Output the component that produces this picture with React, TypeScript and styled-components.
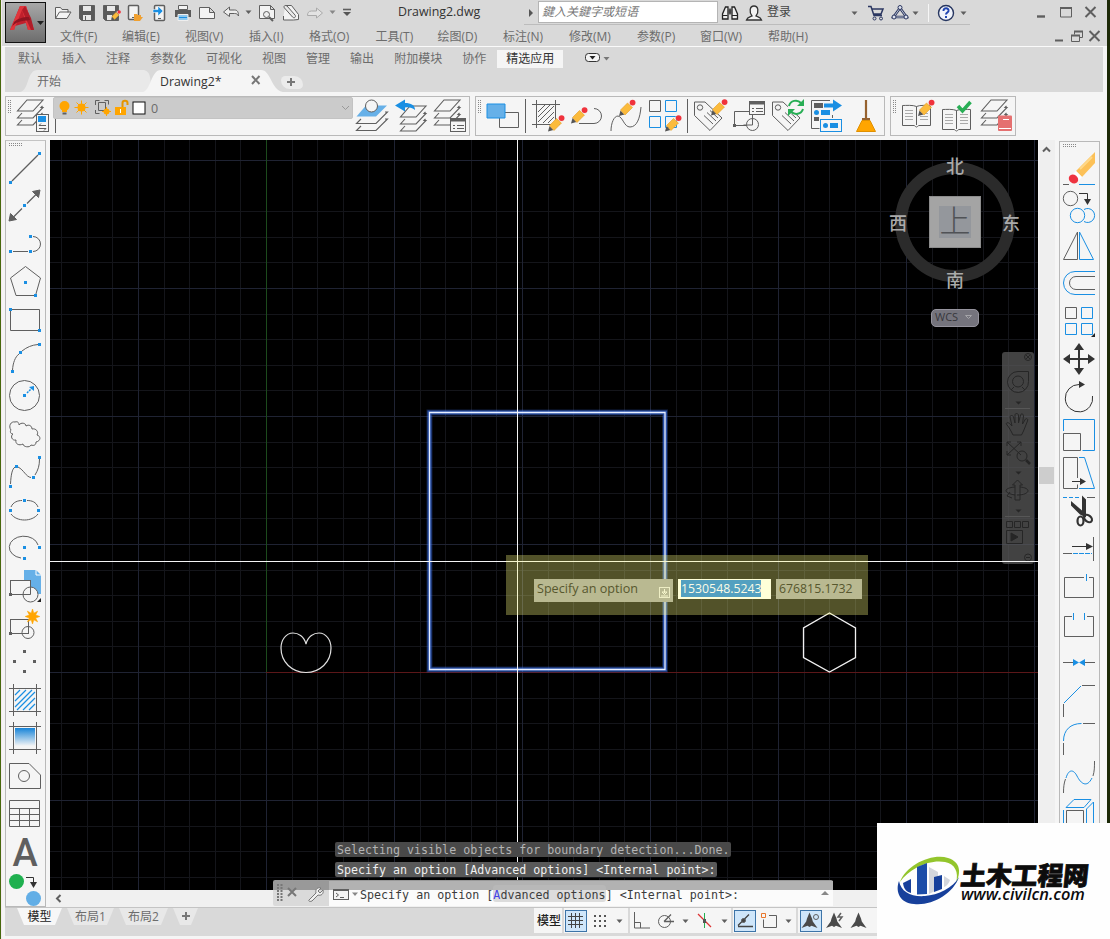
import React from 'react';
import styled, { createGlobalStyle, css } from 'styled-components';

const ui = `"Open Sans", "Noto Sans CJK SC", sans-serif`;
const ink = '#5f5f5f';
const blue = '#1a8fe3';

const GlobalStyle = createGlobalStyle`
  * { box-sizing: border-box; }
  body { margin: 0; background: #24380a; font-family: ${ui}; font-size: 12px; color: #6c6c6c; overflow: hidden; }
  svg { display: block; flex: none; overflow: visible; }
`;

const Desktop = styled.div`
  position: relative;
  width: 1110px;
  height: 939px;
  padding: 0 3px 0 1px;
  background: linear-gradient(90deg, #46680d 0 2px, #1b2806 1100px);
  overflow: hidden;
`;
const Window = styled.div`
  height: 939px;
  background: #f5f5f5;
  border-left: 1px solid #f5e9ee;
  display: flex;
  flex-direction: column;
`;

/* ---------- header ---------- */
const Header = styled.header`
  height: 47px;
  background: #d9d9d9;
  border-bottom: 1px solid #fafafa;
  display: flex;
  padding-left: 3px;
  flex: none;
`;
const AppButton = styled.button`
  width: 41px;
  height: 41px;
  margin-top: 2px;
  padding: 0;
  border: 1px solid #111;
  background: linear-gradient(#a8a8a8, #6d6d6d);
  flex: none;
`;
const HeaderRows = styled.div`flex: 1; padding-left: 6px;`;
const TitleRow = styled.div`
  height: 26px;
  display: flex;
  align-items: center;
`;
const DocTitle = styled.div`
  width: 126px;
  margin-left: 42px;
  font-size: 12.4px;
  line-height: 24px;
  height: 26px;
  color: #333;
  white-space: nowrap;
`;
const Search = styled.div`
  width: 180px;
  height: 22px;
  border: 1px solid #b4b4b4;
  background: #fff;
  padding-left: 3px;
  line-height: 19px;
  font-style: italic;
  color: #777;
  margin: -1px 2px 0 0;
`;
const Underlined = styled.div`
  display: flex;
  align-items: center;
  height: 25px;
  border-bottom: 1px solid #bcbcbc;
  align-self: flex-start;
`;
const SignIn = styled.span`width: 80px; color: #444; line-height: 24px;`;
const MenuRow = styled.nav`
  display: flex;
  height: 20px;
  padding-left: 8px;
  line-height: 21px;
`;
const MenuItem = styled.span<{ $w: number }>`
  width: ${p => p.$w}px;
  white-space: nowrap;
`;

/* ---------- ribbon ---------- */
const Ribbon = styled.div`
  height: 45px;
  margin: 0 4px 0 3px;
  background: #d9d9d9;
  flex: none;
`;
const RibbonTabs = styled.div`
  display: flex;
  height: 23px;
  padding: 3px 0 0 3px;
`;
const RibbonTab = styled.span<{ $on?: boolean }>`
  height: 18px;
  line-height: 18px;
  padding: 0 10px;
  white-space: nowrap;
  ${p => p.$on && css`background: #f5f5f5; color: #333; padding: 0 9px; margin-left: 1px; margin-right: 19px;`}
`;
const FileTabs = styled.div`
  display: flex;
  height: 22px;
  padding-left: 15px;
`;
const FileTab = styled.div<{ $on?: boolean }>`
  height: 22px;
  line-height: 23px;
  width: ${p => (p.$on ? 142 : 131)}px;
  padding-left: 17px;
  margin-right: ${p => (p.$on ? -6 : -8)}px;
  font-size: ${p => (p.$on ? 12.3 : 12)}px;
  color: ${p => (p.$on ? '#333' : '#6c6c6c')};
  background: ${p => (p.$on ? '#f5f5f5' : '#e9e9e9')};
  clip-path: ${p =>
    p.$on
      ? `path('M0 22 C8 20 8 0 18 0 H118 C128 0 128 20 140 22 Z')`
      : `path('M0 22 C10 20 6 0 18 0 H122 C130 0 131 6 131 22 Z')`};
  display: flex;
`;
const TabClose = styled.span`margin: 5px 0 0 29px;`;
const AddTab = styled.span`
  width: 22px;
  height: 13px;
  margin: 6px 0 0 2px;
  background: #ebebeb;
  border-radius: 5px 10px 5px 10px;
`;

/* ---------- toolbars ---------- */
const ToolbarRow = styled.div`
  display: flex;
  gap: 5px;
  padding: 4px 0 0 3px;
  height: 48px;
  flex: none;
`;
const Toolbar = styled.div<{ $w: number }>`
  width: ${p => p.$w}px;
  height: 40px;
  border: 1px solid #b9b9b9;
  display: flex;
`;
const Combo = styled.div`
  width: 300px;
  height: 22px;
  background: #cbcbcb;
  border: 1px solid #c3c3c3;
  border-radius: 2px;
  display: flex;
  align-items: center;
  line-height: 20px;
  font-size: 12px;
`;
const ComboCol = styled.div`display: flex; flex-direction: column; width: 303px;`;
const ComboText = styled.span`flex: 1; padding: 1px 0 0 5px; font-size: 12.5px;`;

const Workspace = styled.div`
  display: flex;
  height: 767px;
  padding-left: 3px;
  flex: none;
`;
const SideBar = styled.div<{ $right?: boolean }>`
  width: 41px;
  height: ${p => (p.$right ? 766 : 767)}px;
  margin: ${p => (p.$right ? '1px 0 0 4px' : '0 4px 0 0')};
  border: 1px solid #b9b9b9;
  ${p => !p.$right && css`border-color: #c4c4c4 #b9b9b9 #b9b9b9;`}
  overflow: hidden;
  flex: none;
`;
const Center = styled.div`width: 1005px; flex: none;`;
const CanvasRow = styled.div`display: flex; height: 750px;`;
const Canvas = styled.main`
  position: relative;
  width: 988px;
  height: 750px;
  background: #000;
  overflow: hidden;
`;
const VScroll = styled.div`
  width: 17px;
  height: 750px;
  padding: 6px 0 0 1px;
  background: linear-gradient(90deg, #f5f5f5 1px, #efefef 1px);
`;
const Thumb = styled.div`
  width: 15px;
  height: 17px;
  margin-top: 309px;
  background: #cdcdcd;
`;
const HScroll = styled.div`
  height: 17px;
  background: #f0f0f0;
  padding: 3px 0 0 4px;
`;

/* ---------- canvas overlays ---------- */
const Scene = styled.svg`position: absolute; left: 0; top: 0;`;
const Wcs = styled.div`
  position: absolute;
  left: 881px;
  top: 169px;
  width: 48px;
  height: 18px;
  border: 1px solid #96949e;
  border-radius: 5px;
  background: #75747d;
  color: #37373c;
  font: 11px/14px ${ui};
  padding-left: 3px;
  display: flex;
  gap: 7px;
`;
const NavBar = styled.div`
  position: absolute;
  left: 952px;
  top: 212px;
  width: 32px;
  height: 212px;
  border-radius: 3px;
  background: rgba(92, 92, 92, .72);
`;
const DynInput = styled.div`
  position: absolute;
  left: 456px;
  top: 415px;
  width: 362px;
  height: 60px;
  background: rgba(255, 255, 128, .32);
  padding: 24px 0 0 28px;
  display: flex;
  align-items: flex-start;
  gap: 5px;
  font: 12.6px/18px ${ui};
  color: #57572e;
`;
const Prompt = styled.div`
  width: 139px;
  height: 23px;
  padding: 0 3px;
  line-height: 20px;
  background: #b9b991;
  display: flex;
  justify-content: space-between;
  white-space: nowrap;
`;
const Coord = styled.div<{ $on?: boolean }>`
  width: ${p => (p.$on ? 93 : 86)}px;
  height: 20px;
  padding: 1px 0 0 3px;
  line-height: 18px;
  font-size: 12.3px;
  background: ${p => (p.$on ? '#ffffd8' : '#b9b991')};
`;
const Selected = styled.span`
  display: block;
  width: 80px;
  height: 17px;
  line-height: 18px;
  background: #53a0c0;
  color: #fbfbe6;
`;
const History = styled.div`
  position: absolute;
  left: 285px;
  top: 702px;
  display: flex;
  flex-direction: column;
  align-items: flex-start;
  gap: 5px;
`;
const HistoryLine = styled.div<{ $dim?: boolean }>`
  height: 15px;
  padding: 0 2px;
  border-radius: 2px;
  background: ${p => (p.$dim ? '#494949' : '#595959')};
  color: ${p => (p.$dim ? '#b4b4b4' : '#f0f0f0')};
  font: 11.65px/17px "DejaVu Sans Mono", monospace;
  white-space: pre;
`;
const CommandLine = styled.div`
  position: absolute;
  left: 273px;
  top: 880px;
  width: 560px;
  height: 26px;
  display: flex;
  border-radius: 2px;
  background: linear-gradient(#999 10px, #dadada 10px);
`;
const CommandField = styled.div`
  margin-top: 1px;
  flex: 1;
  display: flex;
  color: #3c3c3c;
  background: linear-gradient(#b2b2b2 9px, #fbfbfb 9px);
  font: 11.66px/29px "DejaVu Sans Mono", monospace;
  white-space: pre;
`;
const Keyword = styled.span`
  height: 17px;
  line-height: 20px;
  margin-top: 4px;
  border-radius: 3px;
  background: rgba(190, 190, 190, .5);
  & > b { color: #4444e8; font-weight: normal; }
`;

/* ---------- footer ---------- */
const Footer = styled.footer`
  height: 29px;
  margin: 0 4px 0 3px;
  background: #d9d9d9;
  border-top: 1px solid #c4c4c4;
  display: flex;
  flex: none;
`;
const LayoutTabs = styled.div`display: flex; width: 529px; padding-left: 12px;`;
const LayoutTab = styled.span<{ $on?: boolean; $w: number }>`
  width: ${p => p.$w}px;
  height: 17px;
  margin-right: 5px;
  text-align: center;
  line-height: 17px;
  color: ${p => (p.$on ? '#222' : '#6c6c6c')};
  background: ${p => (p.$on ? '#f7f7f7' : '#e8e8e8')};
  clip-path: polygon(0 0, 100% 0, calc(100% - 7px) 100%, 7px 100%);
`;
const StatusGroup = styled.div<{ $w: number }>`
  width: ${p => p.$w}px;
  height: 25px;
  margin: 0 2px 0 0;
  background: #f5f5f5;
  color: #222;
  line-height: 25px;
  display: flex;
`;
const ModelLabel = styled.span`padding-left: 3px; font-weight: 500;`;
const Watermark = styled.aside`
  position: absolute;
  left: 877px;
  top: 823px;
  width: 233px;
  height: 116px;
  background: #fefefe;
  display: flex;
  padding: 30px 0 0 19px;
`;
const Brand = styled.div`
  color: #0c0c0c;
  white-space: nowrap;
  margin-left: -1px;
  & > strong {
    display: block;
    font: 900 25.6px/26px "Noto Sans CJK SC", sans-serif;
    -webkit-text-stroke: 0.8px #0c0c0c;
    transform: skewX(-6deg);
    margin-top: 8px;
  }
  & > span { display: block; font: italic 600 16.4px/14px "Open Sans", sans-serif; }
`;

/* An icon shows the region [x, y, w, h] of the shared drawing plane. */
const Ic = ({ b, children }: { b: [number, number, number, number]; children?: React.ReactNode }) => (
  <svg width={b[2]} height={b[3]} viewBox={b.join(' ')} fill="none" stroke={ink} strokeWidth="1">
    {children}
  </svg>
);
const Sq = ({ at, c = blue }: { at: [number, number][]; c?: string }) => (
  <>{at.map(([x, y]) => <rect key={`${x},${y}`} x={x} y={y} width="3" height="3" fill={c} stroke="none" />)}</>
);
const Caret = ({ x, y, c = ink }: { x: number; y: number; c?: string }) => (
  <path d={`M${x - 3} ${y - 1.5}h6l-3 3.5z`} fill={c} stroke="none" />
);
const Grip = ({ b, row }: { b: [number, number, number, number]; row?: boolean }) => (
  <Ic b={b}>
    {row ? (
      <path strokeDasharray="1 1" stroke="#888" d={`M${b[0] + 3} ${b[1] + 2.5}h14M${b[0] + 3} ${b[1] + 4.5}h14`} />
    ) : (
      <path strokeDasharray="1 1" stroke="#888" d={`M${b[0] + 2.5} ${b[1] + 3}v14M${b[0] + 4.5} ${b[1] + 3}v14`} />
    )}
  </Ic>
);
const Pencil = ({ x, y }: { x: number; y: number }) => (
  <g transform={`translate(${x} ${y})`} stroke="none">
    <path d="M0 0L1.5-5.5 5.5-1.5z" fill="#555" />
    <path d="M1.5-6L8.5-13 13.5-8.5 6-1z" fill="#fbbb3c" stroke="#e29b25" strokeWidth=".6" />
    <path d="M9-13.5L11-15.3 15.6-10.8 13.9-8.8z" fill="#f4eee4" />
    <circle cx="13.6" cy="-13.4" r="2.9" fill="#f0323c" />
  </g>
);
const Layers = ({ x, y, top = 'none' }: { x: number; y: number; top?: string }) => (
  <g transform={`translate(${x} ${y})`} strokeWidth="1.1">
    <path d="M10 .5H26L16 11.5H.5z" fill={top} />
    <path d="M25.5 6.5L24 8H26L16 18.5H.5L5 13.5M25.5 13.5L24 15H26L16 25.5H.5L5 20.5" />
  </g>
);
const Arrow = ({ x, y, r }: { x: number; y: number; r: number }) => (
  <path transform={`translate(${x} ${y}) rotate(${r})`} d="M0-8L5-1H-5z" fill="#333" stroke="none" />
);
const Book = ({ x, y }: { x: number; y: number }) => (
  <g transform={`translate(${x} ${y})`}>
    <path d="M14.5 1.5C11-.2 4 .5.5.5V20.5H12C13 20.5 13.5 22 14.5 22S16 20.5 17 20.5H28.5V.5C25 .5 18-.2 14.5 1.5zV20" />
    <path stroke="#aaa" d="M3 5.500h8M3 8.500h8M3 11.500h8M3 14.500h8M18 5.500h8M18 8.500h8M18 11.500h8M18 14.500h8" />
  </g>
);
const Tag = ({ x, y }: { x: number; y: number }) => (
  <g transform={`translate(${x} ${y})`}>
    <path d="M.5 .5H11L28 16.5 16 29 .5 14z" />
    <circle cx="6" cy="6" r="2.7" />
    <path d="M10 14l9 8.5M13 11l9 8.5M16 9l8 7.5" />
  </g>
);

const QuickAccess = () => (
  <>
    <Ic b={[52, 0, 24, 26]}>
      <path d="M55.5 18.5V7.500h5l1.500 2h6v3M55.500 18.500l4-6.500h11.500l-4 6.500z" fill="#f4f4f4" />
    </Ic>
    <Ic b={[76, 0, 24, 26]}>
      <path d="M79.500 5.500h15v15h-13l-2-2z" fill="#5a5a5a" />
      <path d="M83 6h8v5h-8zM83 15h8v5h-8z" fill="#e8e8e8" stroke="none" />
      <path d="M85.500 16v4" />
    </Ic>
    <Ic b={[100, 0, 24, 26]}>
      <path d="M103.500 5.500h15v15h-13l-2-2z" fill="#5a5a5a" />
      <path d="M107 6h8v5h-8zM107 15h5v5h-5z" fill="#e8e8e8" stroke="none" />
      <g transform="translate(111 20) scale(.6)"><Pencil x={0} y={0} /></g>
    </Ic>
    <Ic b={[124, 0, 24, 26]}>
      <rect x="128.500" y="5.500" width="10" height="14" rx="1" fill="#f3f3f3" strokeWidth="1.500" />
      <path d="M132 17.500h3" />
      <path d="M134 20v-6h3l1 1h3v2h2l-3 4h-6z" fill="#f0a030" stroke="none" />
    </Ic>
    <Ic b={[148, 0, 24, 26]}>
      <rect x="154.500" y="5.500" width="10" height="15" rx="1" fill="#f3f3f3" strokeWidth="1.500" />
      <path d="M158 18.500h3" />
      <path d="M153 9.500h5v-3.500l5 5-5 5v-3.500h-5z" fill={blue} stroke="#fff" strokeWidth=".5" />
    </Ic>
    <Ic b={[172, 0, 24, 26]}>
      <path d="M175 10h16v7h-16z" fill="#5a5a5a" stroke="none" />
      <path d="M178.500 5.500h9v4h-9z" fill="#f3f3f3" />
      <path d="M178 14.500h10v6h-10z" fill="#8fc8ee" stroke="#eee" />
      <path d="M179 17.500h8" stroke={blue} />
    </Ic>
    <Ic b={[196, 0, 24, 26]}>
      <path d="M199.500 7.500h10l5 5v6h-15zM209.500 7.500v5h5" fill="#f3f3f3" />
    </Ic>
    <Ic b={[220, 0, 24, 26]}>
      <path d="M223.500 12l6-5v3h5c3 0 4 2 4 6-1-2-2-2.500-4-2.500h-5v3z" fill="#eee" />
    </Ic>
    <Ic b={[244, 0, 12, 26]}><Caret x={248.500} y={12} /></Ic>
    <Ic b={[256, 0, 24, 26]}>
      <path d="M259.500 5.500h11l4 4v9h-15zM270.500 5.500v4h4" fill="#f3f3f3" />
      <circle cx="266.500" cy="14.500" r="3" fill="#eee" /><path d="M269 17l4 4" strokeWidth="2" />
    </Ic>
    <Ic b={[280, 0, 24, 26]}>
      <path d="M285.500 5.500h6l7 9v5l-5 .5h-10v-4" fill="#f3f3f3" />
      <path d="M284.500 8l8 9c2 2 4-.5 2.500-2l-8-9c-2-1.500-4 .500-2.500 2z" fill="#e9e9e9" />
    </Ic>
    <Ic b={[304, 0, 24, 26]}>
      <path d="M322.500 13l-6-5v3h-5c-3 0-4 2-4 4.500h9v2.500z" stroke="#aaa" fill="#e3e3e3" />
    </Ic>
    <Ic b={[328, 0, 12, 26]}><Caret x={332.500} y={12} c="#888" /></Ic>
    <Ic b={[340, 0, 16, 26]}><path d="M343 9.500h8" strokeWidth="1.600" /><path d="M343 12h8l-4 4z" fill="#555" stroke="none" /></Ic>
  </>
);

const menus: [string, number][] = [
  ['文件(F)', 62], ['编辑(E)', 63], ['视图(V)', 64], ['插入(I)', 60], ['格式(O)', 66.5], ['工具(T)', 62],
  ['绘图(D)', 65.5], ['标注(N)', 66], ['修改(M)', 68], ['参数(P)', 63], ['窗口(W)', 68], ['帮助(H)', 282],
];
const ribbonTabs = ['默认', '插入', '注释', '参数化', '可视化', '视图', '管理', '输出', '附加模块', '协作', '精选应用'];

const TopBar = () => (
  <Header>
    <AppButton>
      <svg width="39" height="39" viewBox="0 0 39 39">
        <path d="M4 27L14 3h6l8 24h-6l-2-7-11 3-1 4z" fill="#c0202c" />
        <path d="M14 3h6l8 24h-6L16 7 8 27H4z" fill="#e0363c" />
        <path d="M16 7l3-4 6 12 3 12h-3z" fill="#b01c28" />
        <path d="M6 24c3-5 9-6 18-7l-1-3c-7 0-12 2-15 5z" fill="#8f1420" />
        <path d="M31 18h7l-3.500 4z" fill="#222" />
      </svg>
    </AppButton>
    <HeaderRows>
      <TitleRow>
        <QuickAccess />
        <DocTitle>Drawing2.dwg</DocTitle>
        <Underlined>
          <Ic b={[524, 0, 14, 24]}><path d="M529 9v8l4-4z" fill="#555" stroke="none" /></Ic>
          <Search>鍵入关鍵字或短语</Search>
          <Ic b={[720, 0, 24, 24]}>
            <path d="M722.500 19v-5l3-7h2.500v12zM737.500 19v-5l-3-7H732v12z" fill="#eee" stroke="#222" strokeWidth="1.300" />
            <path d="M728 9h4v5h-4z" fill="#444" /><path d="M722.500 15.500h5M732 15.500h5" stroke="#222" />
          </Ic>
          <Ic b={[744, 0, 23, 24]}>
            <path d="M746.500 20c1-3 4-3 5.500-4-3-4-2.500-10 2-10s5 6 2 10c1.500 1 4.500 1 5.500 4z" fill="#f2f2f2" stroke="#333" strokeWidth="1.300" />
          </Ic>
          <SignIn>登录</SignIn>
          <Ic b={[847, 0, 17, 24]}><Caret x={854.500} y={13} /></Ic>
          <Ic b={[864, 0, 24, 24]}>
            <path d="M868 6.500h3l3 9h8M872 9h11l-2 5h-8" stroke="#2b3761" strokeWidth="1.500" />
            <circle cx="874.500" cy="18.500" r="1.500" stroke="#2b3761" /><circle cx="881" cy="18.500" r="1.500" stroke="#2b3761" />
          </Ic>
          <Ic b={[888, 0, 22, 24]}>
            <path d="M900 8l-6.500 9h13z" stroke="#2b3761" strokeWidth="2.600" /><path d="M900 8l-6.500 9h13z" stroke="#dfe3ee" strokeWidth=".8" />
            <circle cx="900" cy="7.500" r="2" fill="#dfe3ee" stroke="#2b3761" /><circle cx="894" cy="17" r="2" fill="#dfe3ee" stroke="#2b3761" /><circle cx="906" cy="17" r="2" fill="#dfe3ee" stroke="#2b3761" />
          </Ic>
          <Ic b={[910, 0, 26, 24]}><Caret x={915.500} y={13} /><path d="M928.500 4v18" stroke="#f6f6f6" /></Ic>
          <Ic b={[936, 0, 34, 24]}>
            <circle cx="946" cy="13" r="7.500" fill="#f1f4fb" stroke="#26355f" strokeWidth="1.400" />
            <path d="M943.500 11c0-4 5.500-3.500 5 0-.3 1.500-2.500 1.700-2.500 3.500M946 16v2" stroke="#2145b0" strokeWidth="2" />
            <Caret x={963.500} y={13} />
          </Ic>
        </Underlined>
        <Ic b={[970, 0, 132, 26]}>
          <path d="M1037 16.500h8" strokeWidth="2.400" /><path d="M1060.500 8h11v9h-11z" strokeWidth="1" /><path d="M1060 8h12" strokeWidth="2" />
          <path d="M1085.500 7l10 10M1095.500 7l-10 10" strokeWidth="2" />
        </Ic>
      </TitleRow>
      <MenuRow>
        {menus.map(([t, w]) => <MenuItem key={t} $w={w}>{t}</MenuItem>)}
        <Ic b={[1050, 26, 52, 18]}>
          <path d="M1055 40.500h8" strokeWidth="2" /><path d="M1074.500 34.500v-3h8v6h-3M1071.500 35.500h8v6h-8z" /><path d="M1071 35.500h9M1074 31.500h9" strokeWidth="2" />
          <path d="M1089.500 31l10 10M1099.500 31l-10 10" strokeWidth="2" />
        </Ic>
      </MenuRow>
    </HeaderRows>
  </Header>
);

const TopToolbars = () => (
  <ToolbarRow>
    <Toolbar $w={465}>
      <Grip b={[6, 97, 8, 38]} />
      <Ic b={[14, 97, 39, 38]}>
        <Layers x={17} y={99.5} />
        <rect x="36.500" y="114.500" width="12" height="17" fill="#f5f5f5" /><path d="M38 116h8v6h-8z" fill={blue} stroke="none" />
        <path d="M39 125.500h7M39 125.500l2-2M39 128.500h7M46 128.500l-2 2" />
      </Ic>
      <ComboCol>
        <Combo>
          <Ic b={[56, 98, 76, 20]}>
            <circle cx="66.500" cy="106" r="5" fill="#ffa500" stroke="none" /><path d="M64 109h5v3h-5z" fill="#ffa500" stroke="none" /><path d="M64.500 113.500h4" strokeWidth="2" />
            <circle cx="83.500" cy="107.500" r="4" fill="#ffa500" stroke="none" /><path d="M83.500 100.500v14M76.500 107.500h14M78.500 102.500l10 10M88.500 102.500l-10 10" stroke="#ffa500" />
            <path d="M97.500 105v-4.500h4M106.500 100.500h4v4M97.500 110v3.500h4M100.500 102.500h7v8h-7z" /><circle cx="108.500" cy="111.500" r="3" fill="#ffa500" stroke="none" /><path d="M108.500 107v9M104 111.500h9" stroke="#ffa500" />
            <path d="M117 107h11v8h-11z" fill="#ffa500" stroke="none" /><path d="M124.500 107v-4c0-3 5-3 5 0v2" stroke="#e69500" strokeWidth="2" /><path d="M122.500 109v4" stroke="#fff" />
          </Ic>
          <Ic b={[131, 98, 16, 20]}><rect x="134" y="102" width="12" height="12" fill="#fff" stroke="#111" /></Ic>
          <ComboText>0</ComboText>
          <Ic b={[338, 98, 14, 20]}><path d="M342 106l3.500 3.500 3.500-3.500" stroke="#999" /></Ic>
        </Combo>
        <Ic b={[53, 119, 100, 16]}><path d="M55.500 119v14" /></Ic>
      </ComboCol>
      <Ic b={[356, 97, 38, 38]}>
        <g transform="translate(356 105)" strokeWidth="1.100"><path d="M10 .5H31L20 11.500H.500z" fill="#66b0e8" stroke="none" /><path d="M29 7h2.500L20 18.500H.500L5 14M29 14h2.500L20 25.500H.500L5 21" /></g>
        <circle cx="371.500" cy="106" r="6" fill="#f5f5f5" />
      </Ic>
      <Ic b={[394, 97, 38, 38]}>
        <Layers x={400} y={105.5} />
        <path d="M395 105.500l10-6v3.500c6 0 10 2 10 7-3-2-5-3-10-2.500v4z" fill={blue} stroke="none" />
      </Ic>
      <Ic b={[432, 97, 36, 38]}>
        <Layers x={434} y={99.500} />
        <rect x="450.500" y="118.500" width="15" height="13" fill="#f5f5f5" /><path d="M450 120h16" strokeWidth="3" /><path d="M453 125.500h2M453 128.500h2M457 125.500h7M457 128.500h7" />
      </Ic>
    </Toolbar>
    <Toolbar $w={410}>
      <Grip b={[475, 97, 7, 38]} />
      <Ic b={[483, 97, 46, 38]}>
        <path d="M499.500 112.500h19v15h-19z" /><path d="M487 104h18v14h-18z" fill="#66b0e8" stroke={blue} />
        <path d="M525.500 99v34" />
      </Ic>
      <Ic b={[529, 97, 39, 38]}>
        <path d="M536.500 100v28M555.500 100v28M532 104.500h28M532 124.500h28M538 112l7-7M538 117l12-12M538 122l16-16M543 123l11-11M548 123l6-6" />
        <Pencil x={548} y={131.500} />
      </Ic>
      <Ic b={[568, 97, 39, 38]}><path d="M579 123.500h15a7.500 7.500 0 0 0 0-15" /><Pencil x={571} y={123.500} /></Ic>
      <Ic b={[607, 97, 39, 38]}><path d="M611 131c0-8 3-15 7-15 5 1 6 11 12 11 7 0 10-9 11-20" /><Pencil x={619} y={116} /></Ic>
      <Ic b={[646, 97, 44, 38]}>
        <path d="M649.500 100.500h11v11h-11z" /><path d="M665.500 100.500h11v11h-11zM649.500 116.500h11v11h-11zM665.500 116.500h11v11h-11z" stroke={blue} />
        <Pencil x={665} y={131.500} /><path d="M687.500 99v34" />
      </Ic>
      <Ic b={[690, 97, 40, 38]}><Tag x={694} y={101.500} /><Pencil x={711} y={115.500} /></Ic>
      <Ic b={[730, 97, 39, 38]}>
        <path d="M734.500 111.500h18v14h-18z" /><Sq at={[[733, 124]]} c={ink} />
        <circle cx="752.500" cy="124.500" r="6" fill="#f5f5f5" /><path d="M752.500 116v9h-9" />
        <rect x="749.500" y="101.500" width="15" height="13" fill="#f5f5f5" /><path d="M749 103h16" strokeWidth="3" /><path d="M752 108.500h2M752 111.500h2M756 108.500h7M756 111.500h7" />
      </Ic>
      <Ic b={[769, 97, 39, 38]}>
        <Tag x={772} y={101.500} /><circle cx="796" cy="107" r="8" fill="#f5f5f5" stroke="none" />
        <path d="M789 106a7 7 0 0 1 12-3M803 109a7 7 0 0 1-12 2.500" stroke="#28ae55" strokeWidth="2" />
        <path d="M804 99v7h-7zM788 116v-7h7z" fill="#28ae55" stroke="none" />
      </Ic>
      <Ic b={[808, 97, 42, 38]}>
        <path d="M830 100.500h-18.500v28h8M832.500 115v3" /><path d="M814 103h9v5h-9zM814 117h5v4h-5z" fill={ink} stroke="none" />
        <path d="M824 103.500h9v-4l9 6-9 6v-4h-9z" fill={blue} stroke="none" /><circle cx="816.500" cy="112.500" r="2.500" fill={blue} stroke="none" /><path d="M821 110h9v5h-9z" fill={blue} stroke="none" />
        <rect x="820.500" y="119.500" width="21" height="12" stroke={blue} /><circle cx="825.500" cy="125.500" r="2.500" fill={blue} stroke="none" /><path d="M830 123h8v5h-8z" fill={blue} stroke="none" />
      </Ic>
      <Ic b={[850, 97, 34, 38]}>
        <path d="M866 100v18M862 119h8" stroke="#96622f" strokeWidth="2.200" /><path d="M862 120.500h8l5.500 11h-19z" fill="#ffa500" stroke="#e09000" />
      </Ic>
    </Toolbar>
    <Toolbar $w={126}>
      <Grip b={[891, 97, 8, 38]} />
      <Ic b={[899, 97, 39, 38]}><Book x={902} y={105} /><Pencil x={918} y={116} /></Ic>
      <Ic b={[938, 97, 39, 38]}><Book x={942} y={109} /><path d="M958 106l4.500 5 8-9" stroke="#28ae55" strokeWidth="3.500" /></Ic>
      <Ic b={[977, 97, 37, 38]}>
        <Layers x={981} y={99.500} /><rect x="998" y="115.500" width="14" height="15.500" rx="1" fill="#e57070" stroke="none" /><path d="M1003 119.500h6M999 128.500h12" stroke="#fff" />
      </Ic>
    </Toolbar>
  </ToolbarRow>
);

const G = '#5f5f5f';
const drawTools: React.ReactNode[] = [
  <><path d="M12 181L38 155" strokeWidth="1.200" /><Sq at={[[9, 181], [38, 152]]} /></>,
  <><path d="M13 217.500L22 208.500M27 203.500L36 194.500" strokeWidth="1.200" /><path d="M40 190l-1.500 7.500-6-6zM9 221l1.500-7.500 6 6z" fill={G} /><Sq at={[[23, 204]]} /></>,
  <><path d="M13 251.500h15M33 251.500a7.500 7.500 0 0 0 0-15" /><Sq at={[[9, 250], [29, 250], [29, 235]]} /></>,
  <><path d="M25.500 266.500L40.500 278 35.500 295.500h-19.500L10.500 278z" /><Sq at={[[24, 281], [34, 294]]} /></>,
  <><path d="M10.500 309.500h29v21h-29z" /><Sq at={[[9, 308], [38, 329]]} /></>,
  <><path d="M12.500 370C13 363 15 357 19 354M22 351C27 347 32 345 38 344.500" /><Sq at={[[38, 343], [19, 351], [11, 370]]} /></>,
  <><circle cx="24.500" cy="395.500" r="15" /><path d="M27 393l5-5" stroke={blue} strokeDasharray="2 1" strokeWidth="1.500" /><path d="M34 386v5l-5-4z" fill={blue} stroke="none" /><Sq at={[[23, 394]]} /></>,
  <path d="M11 430c-3-4 0-9 4-8 3-1 4 1 4 3 2-3 7-2 7 1 3-2 6 0 6 3 4-1 7 3 5 6 4 1 4 6-1 7 0 3-2 4-5 3-1 3-8 2-8-1-4 2-8 0-7-4-4 1-6-4-3-6-3 0-3-3-2-4z" />,
  <><path d="M10.500 484C11 475 12 469 15 467M18 467C24 470 26 477 31 477.500M35 475C38 470 39.500 466 39.500 459" /><Sq at={[[9, 485], [15, 465], [32, 476], [38, 456]]} /></>,
  <><path d="M11 507C13 502 18 500.500 22 500.500M27 500.500C32 500.500 36 502 38 507M11 514C17 522 32 522 38 514" /><Sq at={[[23, 499], [9, 509], [37, 509]]} /></>,
  <><path d="M38 545A14.500 11 0 1 0 21 558" /><Sq at={[[23, 546], [38, 546], [23, 557]]} /></>,
  <><path d="M24 570h12l5 5v19H24z" fill="#66b0e8" stroke="none" /><path d="M36 570v5h5" stroke="#fff" /><rect x="10.500" y="580.500" width="20" height="14" fill="#f5f5f5" /><circle cx="30.500" cy="594.500" r="7.500" fill="#f5f5f5" /><path d="M30.500 586v8.500h-8" /><Sq at={[[9, 593]]} c={G} /><path d="M41 598v4h-4z" fill="#222" stroke="none" /></>,
  <><rect x="10.500" y="619.500" width="18" height="14" /><circle cx="28" cy="632.500" r="6" /><Sq at={[[9, 632]]} c={G} /><path d="M32.500 609l1.300 4.200 3.800-2-2 3.800 4.200 1.500-4.200 1.500 2 3.800-3.800-2-1.300 4.200-1.300-4.200-3.800 2 2-3.800-4.200-1.500 4.200-1.500-2-3.800 3.800 2z" fill="#ffa500" stroke="#ffa500" strokeWidth=".6" /></>,
  <Sq at={[[23, 650], [13, 660], [33, 660], [23, 670]]} c={G} />,
  <><path d="M13.500 684v32M36.500 684v32M9 688.500h32M9 711.500h32" /><path d="M15 695l5-5M15 701l11-11M15 707l17-17M17 710l18-18M23 710l12-12M29 710l6-6" stroke={blue} strokeWidth="1.200" /></>,
  <><defs><linearGradient id="fade" x2="0" y2="1"><stop stopColor="#1784d8" /><stop offset="1" stopColor="#f5f5f5" /></linearGradient></defs><path d="M15 728h20v18H15z" fill="url(#fade)" stroke="none" /><path d="M13.500 722v32M36.500 722v32M9 726.500h32M9 749.500h32" /></>,
  <><path d="M9.500 763.500H29L40.500 775v13.500h-31z" /><circle cx="24" cy="776" r="5.500" /></>,
  <path d="M9.500 800.500h30v26h-30zM9.500 808.500h30M9.500 814.500h30M9.500 820.500h30M19.500 808.500v18M29.500 808.500v18" />,
  <text x="25" y="866" textAnchor="middle" fontFamily="Roboto, sans-serif" fontWeight="500" fontSize="38" fill={G} stroke="none">A</text>,
  <><circle cx="16.500" cy="881.500" r="7.500" fill="#1fb04f" stroke="none" /><circle cx="33.500" cy="898.500" r="7.500" fill="#62aee6" stroke="none" /><path d="M26 877.500h7.500v5" stroke="#333" /><path d="M30 882h7l-3.500 6z" fill="#333" stroke="none" /></>,
];

const modifyTools: React.ReactNode[] = [
  <><path d="M1095 152v11l-13 14-6-6z" fill="#fcc158" stroke="none" /><path d="M1092 157l-12 12" stroke="#ffd88a" strokeWidth="2" /><path d="M1076 171l6 6-4 4-6-6z" fill="#fff" stroke="none" /><ellipse cx="1073.500" cy="179" rx="5" ry="4.200" transform="rotate(38 1073.500 179)" fill="#ee3340" stroke="none" /><path d="M1063 184.500h6" /><path d="M1079 184.500h16" stroke={blue} /></>,
  <><circle cx="1070.500" cy="198.500" r="7.200" /><path d="M1079 193.500h8.500v6" stroke="#333" /><path d="M1084 199h7l-3.500 6z" fill="#333" stroke="none" /><circle cx="1077.500" cy="215.500" r="7.200" stroke={blue} /><path d="M1084 209.500a7 7 0 1 1 0 12" stroke={blue} /></>,
  <><path d="M1077.500 232v27.500h-14z" /><path d="M1079.500 232v27.500h14z" stroke={blue} /></>,
  <><path d="M1095 271.500h-20a11.500 11.500 0 0 0 0 23h20" stroke={blue} /><path d="M1095 276.500h-19a6.500 6.500 0 0 0 0 13h19" /></>,
  <><path d="M1065.500 307.500h11v11h-11z" /><path d="M1081.500 307.500h11v11h-11zM1065.500 323.500h11v11h-11zM1081.500 323.500h11v11h-11z" stroke={blue} /><path d="M1095 333v4h-4z" fill="#222" stroke="none" /></>,
  <><path d="M1079 347v24M1067 359h24" stroke="#333" strokeWidth="2" /><Arrow x={1079} y={351} r={0} /><Arrow x={1079} y={367} r={180} /><Arrow x={1071} y={359} r={-90} /><Arrow x={1087} y={359} r={90} /></>,
  <><path d="M1092.500 396a13.700 13.700 0 1 1-13.500-11.500" stroke="#333" /><path d="M1079 381l6 3.500-6 3.500z" fill="#333" stroke="none" /></>,
  <><path d="M1063.500 431v-11.500h31v31h-12" stroke={blue} /><path d="M1063.500 433.500h17v17h-17z" /></>,
  <><path d="M1077.500 478v-20.500h-14v31h14v-4" /><path d="M1079 457.500h5.500l10 31h-15.500" stroke={blue} /><path d="M1072 481.500h9" stroke="#333" /><path d="M1080 478l6 3.500-6 3.500z" fill="#333" stroke="none" /></>,
  <><path d="M1063 497.500h16" stroke={blue} strokeDasharray="4 2" /><path d="M1087 497.500h8" /><path d="M1071 501v4.500l9 9 6 3v-18l-4-4v15z" fill="#333" stroke="none" /><ellipse cx="1080.500" cy="521" rx="3" ry="4.500" stroke="#333" strokeWidth="2.200" /><ellipse cx="1088" cy="518.500" rx="4.500" ry="3" stroke="#333" strokeWidth="2.200" transform="rotate(40 1088 518.500)" /></>,
  <><path d="M1093.500 537v24M1063 553.500h9" /><path d="M1073 553.500h19" stroke={blue} strokeDasharray="5 1" /><path d="M1072 546.500h14" stroke="#333" /><path d="M1086 543l7 3.500-7 3.500z" fill="#333" stroke="none" /></>,
  <><path d="M1084 577.500h-19.500v20h29v-20H1089" /><path d="M1086.500 574v7" stroke={blue} /></>,
  <><path d="M1072 616.500h-7.500v20h29v-20H1087" /><path d="M1073.500 613v7M1084.500 613v7" stroke={blue} /></>,
  <><path d="M1063 662.500h10M1085 662.500h10" /><path d="M1073 659l6 3.500-6 3.500zM1085 659l-6 3.500 6 3.500z" fill={blue} stroke="none" /></>,
  <><path d="M1082 685.500h13M1063.500 704v13" /><path d="M1064 703l17-17" stroke={blue} /></>,
  <><path d="M1083 723.500h12M1063.500 743v12" /><path d="M1063.500 741c0-11 7-17.500 18-17.500" stroke={blue} /></>,
  <><path d="M1063.500 793c0-6 .5-10 2-14M1094.500 761c0 6 0 10-1.500 15" /><path d="M1066 778c3-10 8-8 11-2 4 8 10 12 15 2" stroke={blue} /></>,
  <><path d="M1063.500 830v-20M1066 807.500l8-8h17l-7 8zM1086.500 830v-21l7-7v22" stroke={blue} /><path d="M1066.500 830v-19.500h17V830" /></>,
];

const DrawingScene = () => {
  const lines = [];
  for (let i = -8; i < 31; i++) {
    const x = Math.round(216 + i * 25.6) + 0.5;
    if (i % 5) lines.push(<path key={'x' + i} d={`M${x} 0V750`} stroke="#14151a" />);
    const y = Math.round(532 + i * 25.6 - 256) + 0.5;
    if (i % 5) lines.push(<path key={'y' + i} d={`M0 ${y}H988`} stroke="#14151a" />);
  }
  for (let i = -10; i < 35; i += 5) {
    const x = Math.round(216 + i * 25.6) + 0.5;
    const y = Math.round(276 + i * 25.6) + 0.5;
    lines.push(<path key={'X' + i} d={`M${x} 0V750M0 ${y}H988`} stroke="#1f2333" />);
  }
  return (
    <Scene width="988" height="750" fill="none">
      {lines}
      <path d="M216.500 0V532" stroke="#1c4a1c" />
      <path d="M216 532.500H988" stroke="#5c1719" />
      <g transform="translate(-50 -140)">
        <g stroke="#3a70e8">
          <path d="M429.500 412.500h235.500v257H429.500z" strokeWidth="6" opacity=".28" />
          <path d="M429.500 412.500h235.500v257H429.500z" strokeWidth="4" opacity=".6" />
          <path d="M429.500 412.500h235.500v257H429.500z" stroke="#e8efff" strokeWidth="1.300" />
        </g>
        <path d="M306 644C304 636 298 633 293 633C286 633 281 640 281 648C281 662 292 672.500 306 672.500C320 672.500 331 662 331 648C331 640 326 633 319 633C314 633 308 636 306 644z" stroke="#e0e0e0" strokeWidth="1.200" />
        <path d="M829.500 613l26 15v29.500l-26 14.500-26-14.500V628z" stroke="#f2f2f2" strokeWidth="1.300" />
        <circle cx="955" cy="222" r="54" stroke="#2b2b2b" strokeWidth="12" />
        <rect x="929.500" y="196.500" width="51" height="51" fill="#a4a4a4" stroke="#8c8c8c" />
        <rect x="939" y="206" width="32" height="32" fill="#94979c" />
        <g fontFamily="Noto Sans CJK SC, sans-serif" textAnchor="middle" fontSize="18" fontWeight="500" fill="#aaa">
          <text x="955" y="173">北</text><text x="898" y="229.500">西</text><text x="1011" y="229.500">东</text><text x="955" y="286.500">南</text>
          <text x="955" y="232" fontSize="31" fill="#505256" fontWeight="300">上</text>
        </g>
      </g>
    </Scene>
  );
};

const NavIcons = () => (
  <svg width="32" height="212" viewBox="1002 352 32 212" fill="none" stroke="#262626">
    <circle cx="1028" cy="357" r="3.500" /><path d="M1026 355l4 4M1030 355l-4 4" />
    <path d="M1018 371.500h10.500v10a10.500 10.500 0 1 1-10.500-10z" /><circle cx="1018" cy="381.500" r="5.500" />
    <path d="M1011 390l3-3M1025 390l-3-3" />
    <path d="M1015.500 401.500h6l-3 3zM1015.500 471.500h6l-3 3zM1015.500 509.500h6l-3 3z" fill="#262626" stroke="none" />
    <path d="M1005 408.500h25M1005 516.500h25" stroke="#575757" />
    <path d="M1013 435c-2-4-4-8-6-10s1-4 4 0l1 1-2-9c0-2 3-2 3.500 0l1.500 6V415c0-2 3-2 3.500 0v8l2-8c1-2 3-1 3 1l-1 8 3-5c1-1 3 0 2 2l-4 10-2 4z" />
    <path d="M1007 442l14 13M1021 442l-14 13M1007 446v-4h4M1017 442h4v4M1007 451v4h4" /><circle cx="1022" cy="456" r="5" /><path d="M1026 460l4 4" strokeWidth="2.500" />
    <path d="M1015 500v-15h-2.500l5-5 5 5h-2.500v15zM1015 487c-12 1-12 6 0 8M1020 487c12 1 10 8-3 8M1010 492l-3 4 5 2" />
    <path d="M1006.500 521.500h6v6h-6zM1014.500 521.500h6v6h-6zM1022.500 521.500h6v6h-6zM1006.500 530.500h16v13h-16z" /><path d="M1011 533l7 4-7 4z" fill="#262626" />
    <circle cx="1028" cy="557.500" r="3.500" /><path d="M1026 557.500h4" />
  </svg>
);

const Beacon = ({ x }: { x: number }) => (
  <path d={`M${x} 912.5l2.500 6 .8 3 4.700 6.500-6-2.200-2 1.200-2-1.200-6 2.200 4.700-6.500.8-3z`} fill="#4a4a4a" stroke="none" />
);

const StatusBar = () => (
  <Footer>
    <LayoutTabs>
      <LayoutTab $on $w={45}>模型</LayoutTab>
      <LayoutTab $w={47}>布局1</LayoutTab>
      <LayoutTab $w={49}>布局2</LayoutTab>
      <LayoutTab $w={25}><Ic b={[173, 908, 25, 15]}><path d="M182 916h8M186 912v8" strokeWidth="2" stroke="#777" /></Ic></LayoutTab>
    </LayoutTabs>
    <StatusGroup $w={28}><ModelLabel>模型</ModelLabel></StatusGroup>
    <StatusGroup $w={64}>
      <Ic b={[564, 908, 63, 25]}>
        <rect x="565.500" y="910.500" width="21" height="21" fill="#cfe6fa" stroke="#3d74a8" />
        <path d="M571.500 913v15M575.500 913v15M579.500 913v15M568 916.500h15M568 920.500h15M568 924.500h15" stroke="#444" />
        {[594, 599, 604].map(x => [915, 920, 925].map(y => <path key={`${x}${y}`} d={`M${x} ${y}h2v2h-2z`} fill="#555" stroke="none" />))}
        <Caret x={619.500} y={921} />
      </Ic>
    </StatusGroup>
    <StatusGroup $w={101}>
      <Ic b={[630, 908, 101, 25]}>
        <path d="M634.500 912v16H650M634.500 922.500h6v5.500" />
        <circle cx="664.500" cy="921.500" r="6" /><path d="M664 921.500h10M664 921.500l7-7" strokeWidth="1.300" /><Caret x={685.500} y={921} />
        <path d="M698 914l13 13" stroke="#d33" strokeWidth="1.300" /><path d="M704.500 913v15" stroke="#22b050" /><path d="M703 919h3v4h-3z" fill="#555" stroke="none" /><Caret x={724.500} y={921} />
      </Ic>
    </StatusGroup>
    <StatusGroup $w={63}>
      <Ic b={[733, 908, 63, 25]}>
        <rect x="734.500" y="910.500" width="21" height="21" fill="#cfe6fa" stroke="#3d74a8" /><path d="M738 926.500h15M738 925.500l11-11" stroke="#444" strokeWidth="1.300" /><circle cx="743.500" cy="920.500" r="2" fill="#444" />
        <path d="M769 915.500h7.500v12h-13v-8" /><path d="M761.500 913.500h4v4h-4z" stroke="#e8762b" /><Caret x={788.500} y={921} />
      </Ic>
    </StatusGroup>
    <StatusGroup $w={80}>
      <Ic b={[798, 908, 80, 25]}>
        <rect x="800.500" y="910.500" width="21" height="21" fill="#cfe6fa" stroke="#3d74a8" />
        <Beacon x={809.500} /><circle cx="816" cy="917" r="2.500" fill="#cfe6fa" /><Beacon x={834} /><path d="M841 913l-3 4h4l-3 4" strokeWidth="1.500" /><Beacon x={858.500} />
      </Ic>
    </StatusGroup>
  </Footer>
);

export default function App() {
  return (
    <Desktop>
      <GlobalStyle />
      <Window>
        <TopBar />
        <Ribbon>
          <RibbonTabs>
            {ribbonTabs.map((t, i) => <RibbonTab key={t} $on={i === 10}>{t}</RibbonTab>)}
            <Ic b={[582, 50, 30, 17]}>
              <rect x="585.500" y="53.500" width="14" height="8" rx="3" fill="#f4f4f4" stroke="#333" /><Caret x={592.500} y={57.500} c="#222" /><Caret x={606.500} y={58.500} c="#777" />
            </Ic>
          </RibbonTabs>
          <FileTabs>
            <FileTab>开始</FileTab>
            <FileTab $on>Drawing2*<TabClose><Ic b={[250, 76, 12, 12]}><path d="M252 77l7.500 8M259.500 77l-7.500 8" strokeWidth="2" stroke="#777" /></Ic></TabClose></FileTab>
            <AddTab><Ic b={[281, 76, 22, 13]}><path d="M287 82h8M291 78v8" strokeWidth="2" stroke="#777" /></Ic></AddTab>
          </FileTabs>
        </Ribbon>
        <TopToolbars />
        <Workspace>
          <SideBar>
            <Grip b={[6, 141, 39, 8]} row />
            {drawTools.map((n, i) => <Ic key={i} b={[6, 149 + i * 38, 39, 38]}>{n}</Ic>)}
          </SideBar>
          <Center>
            <CanvasRow>
              <Canvas>
                <DrawingScene />
                <Wcs>WCS<Ic b={[966, 310, 8, 14]}><path d="M966.500 315.500h6l-3 3z" stroke="#a5a5a9" /></Ic></Wcs>
                <NavBar><NavIcons /></NavBar>
                <Scene width="988" height="750"><path d="M467.500 0V750M0 421.500H988" stroke="#f4f4f4" strokeWidth="1" /></Scene>
                <DynInput>
                  <Prompt>Specify an option
                    <Ic b={[659, 579, 11, 23]}><rect x="659.500" y="587.500" width="10" height="10" stroke="#eeeec4" /><path d="M664.500 589v4M662 592l2.500 2.500 2.500-2.500zM661 596h7" stroke="#f6f6cc" /></Ic>
                  </Prompt>
                  <Coord $on><Selected>1530548.5243</Selected></Coord>
                  <Coord>676815.1732</Coord>
                </DynInput>
                <History>
                  <HistoryLine $dim>Selecting visible objects for boundary detection...Done.</HistoryLine>
                  <HistoryLine>{'Specify an option [Advanced options] <Internal point>:'}</HistoryLine>
                </History>
              </Canvas>
              <VScroll>
                <Ic b={[1039, 146, 15, 12]}><path d="M1043 151.500l3.500-3.500 3.500 3.500" strokeWidth="2" /></Ic>
                <Thumb />
              </VScroll>
            </CanvasRow>
            <HScroll><Ic b={[54, 893, 12, 12]}><path d="M60.500 895l-3.500 3.500 3.500 3.500" strokeWidth="2" /></Ic></HScroll>
          </Center>
          <SideBar $right>
            <Grip b={[1060, 142, 39, 8]} row />
            {modifyTools.map((n, i) => <Ic key={i} b={[1060, 150 + i * 38, 39, 38]}>{n}</Ic>)}
          </SideBar>
        </Workspace>
        <StatusBar />
      </Window>
      <CommandLine>
        <Ic b={[273, 880, 56, 26]}>
          <path d="M278 884v17M281.500 884v17" strokeWidth="2" strokeDasharray="2 1" stroke="#777" />
          <path d="M288 888l8 8M296 888l-8 8" stroke="#777" strokeWidth="2" />
          <path d="M309 900l7-7c-1-4 2-6 5-5l-3 3 2 2 3-3c1 4-2 6-5 5l-6 6c-2 1-4 0-3-1z" fill="#f0f0f0" stroke="#777" />
        </Ic>
        <CommandField>
          <Ic b={[329, 881, 31, 25]}>
            <rect x="333.500" y="889.500" width="15" height="10" fill="#f4f4f4" /><path d="M333 890h16" strokeWidth="2" /><path d="M336 893l2.500 2-2.500 2M340 897.500h4" /><Caret x={355} y={894} c="#888" />
          </Ic>
          {'Specify an option ['}<Keyword><b>A</b>dvanced options</Keyword>{'] <Internal point>:'}
          <Ic b={[739, 881, 94, 25]}><path d="M821 895h8l-4-4z" fill="#888" stroke="none" /></Ic>
        </CommandField>
      </CommandLine>
      <Watermark>
        <svg width="66" height="56" viewBox="896 853 66 56">
          <path d="M900 882C906 865 932 853 948 858C961 862 961 873 956 883C959 872 955 864 945 862C929 859 909 869 900 882z" fill="#93c52c" />
          <path d="M899 881C895 892 900 903 914 904C932 906 953 894 959 877C953 888 938 895 925 896C911 897 901 892 899 881z" fill="#17409b" />
          <path d="M903 883l8-4v14c-4-1-7-3-8-10z" fill="#17409b" />
          <path d="M917 867l10-4v31l-10 .5z" fill="#1d4da8" />
          <path d="M929 867l9 5v8l-3 3v8l-6 3z" fill="#d3d6dc" />
          <path d="M934 877l8-2v14l-8 3z" fill="#17409b" /><path d="M944 876l6 4c-1 3-3 6-6 7z" fill="#d3d6dc" />
        </svg>
        <Brand><strong>土木工程网</strong><span>www.civilcn.com</span></Brand>
      </Watermark>
    </Desktop>
  );
}
